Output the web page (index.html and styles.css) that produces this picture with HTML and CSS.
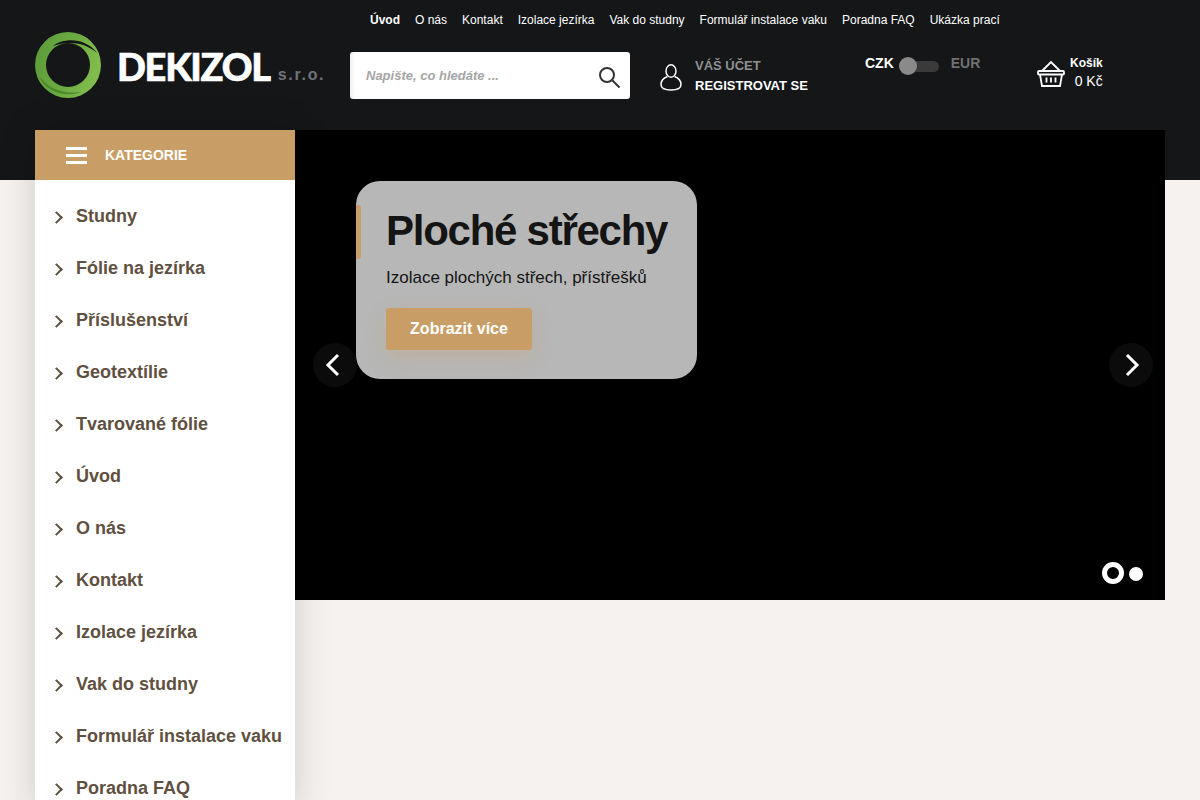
FILE: index.html
```html
<!DOCTYPE html>
<html lang="cs">
<head>
    <meta charset="UTF-8" />
    <meta name="viewport" content="width=device-width, initial-scale=1" />
    <title>Dekizol s.r.o.</title>
    <link rel="stylesheet" href="styles.css">
</head>
<body>

    <header class="hlavicka">
        <nav class="horni-menu">
            <a href="#" class="aktivni">Úvod</a>
            <a href="#">O nás</a>
            <a href="#">Kontakt</a>
            <a href="#">Izolace jezírka</a>
            <a href="#">Vak do studny</a>
            <a href="#">Formulář instalace vaku</a>
            <a href="#">Poradna FAQ</a>
            <a href="#">Ukázka prací</a>
        </nav>

        <div class="hlavni-radek">
            <a href="#" class="logo">
                <svg class="logo-kruh" width="66" height="66" viewBox="0 0 66 66">
                    <defs>
                        <linearGradient id="zelena" x1="0" y1="0" x2="1" y2="0.3">
                            <stop offset="0" stop-color="#5a9a38" />
                            <stop offset="0.6" stop-color="#6dab42" />
                            <stop offset="1" stop-color="#80bb4c" />
                        </linearGradient>
                    </defs>
                    <path fill-rule="evenodd" fill="url(#zelena)" d="M33 0a33 33 0 1 1 0 66a33 33 0 1 1 0-66zM33 11a22 22 0 1 0 0 44a22 22 0 1 0 0-44z" />
                    <path fill="#141618" d="M18 14C28 6 50 5 62 21C49 10 33 9 18 14z" />
                    <path fill="#4d8a2e" d="M4 44C10 60 30 66 46 60C30 62 14 58 4 44z" />
                </svg>
                <span class="logo-nazev">DEKIZOL</span>
                <span class="logo-sro">s.r.o.</span>
            </a>

            <form class="hledani">
                <input type="text" placeholder="Napište, co hledáte ..." />
                <svg width="24" height="24" viewBox="0 0 24 24" fill="none" stroke="#333" stroke-width="2">
                    <circle cx="10" cy="11" r="7" />
                    <path d="M15 16L22.500 23.500" />
                </svg>
            </form>

            <a href="#" class="ucet">
                <svg width="22" height="27" viewBox="0 0 22 27" fill="none" stroke="#fff" stroke-width="1.500">
                    <ellipse cx="11" cy="7" rx="5" ry="6.200" />
                    <path d="M7.500 12.500C3.500 14 1 16.500 1 20.500C1 24 4 26 11 26C18 26 21 24 21 20.500C21 16.500 18.500 14 14.500 12.500" />
                </svg>
                <span class="ucet-text">
                    <span class="ucet-popis">VÁŠ ÚČET</span>
                    <span class="ucet-odkaz">REGISTROVAT SE</span>
                </span>
            </a>

            <div class="mena">
                <span class="mena-aktivni">CZK</span>
                <span class="prepinac"><span class="prepinac-bod"></span></span>
                <span class="mena-druha">EUR</span>
            </div>

            <a href="#" class="kosik">
                <svg width="28" height="26" viewBox="0 0 28 26" fill="none" stroke="#fff" stroke-width="1.800">
                    <path d="M5 10L14 1L23 10" />
                    <rect x="1" y="10" width="26" height="3.500" rx="1" />
                    <path d="M3 13.500L5 25H23L25 13.500" />
                    <path d="M9.500 16.500V21.500M14 16.500V21.500M18.500 16.500V21.500" />
                </svg>
                <span class="kosik-text">
                    <strong>Košík</strong>
                    <span>0 Kč</span>
                </span>
            </a>
        </div>
    </header>

    <main class="obsah">
        <aside class="kategorie">
            <div class="kategorie-hlava">
                <span class="hamburger"><i></i><i></i><i></i></span>
                KATEGORIE
            </div>
            <ul class="kategorie-seznam">
                <li><a href="#">Studny</a></li>
                <li><a href="#">Fólie na jezírka</a></li>
                <li><a href="#">Příslušenství</a></li>
                <li><a href="#">Geotextílie</a></li>
                <li><a href="#">Tvarované fólie</a></li>
                <li><a href="#">Úvod</a></li>
                <li><a href="#">O nás</a></li>
                <li><a href="#">Kontakt</a></li>
                <li><a href="#">Izolace jezírka</a></li>
                <li><a href="#">Vak do studny</a></li>
                <li><a href="#">Formulář instalace vaku</a></li>
                <li><a href="#">Poradna FAQ</a></li>
            </ul>
        </aside>

        <section class="slider">
            <div class="karta">
                <span class="karta-znacka"></span>
                <h1>Ploché střechy</h1>
                <p>Izolace plochých střech, přístřešků</p>
                <a href="#" class="tlacitko">Zobrazit více</a>
            </div>

            <button class="sipka sipka-leva" aria-label="Předchozí">
                <svg width="16" height="24" viewBox="0 0 16 24" fill="none" stroke="#fff" stroke-width="3"><path d="M13 2L3 12L13 22" /></svg>
            </button>
            <button class="sipka sipka-prava" aria-label="Další">
                <svg width="16" height="24" viewBox="0 0 16 24" fill="none" stroke="#fff" stroke-width="3"><path d="M3 2L13 12L3 22" /></svg>
            </button>

            <div class="tecky">
                <span class="tecka tecka-aktivni"></span>
                <span class="tecka"></span>
            </div>
        </section>
    </main>

</body>
</html>
```

FILE: styles.css
```css
* {
    box-sizing: border-box;
}

html,
body {
    height: 800px;
    overflow: hidden;
}

body {
    font-family: 'Liberation Sans', Arial, sans-serif;
    background-color: #f6f2ef;
    margin: 0;
    color: #333;
}

a {
    color: inherit;
    text-decoration: none;
}

.hlavicka {
    background-color: #141618;
    height: 180px;
    padding: 0 35px;
    color: white;
}

.horni-menu {
    display: flex;
    gap: 15px;
    height: 32px;
    padding: 13px 0 0 335px;
    font-size: 12px;
    line-height: 14px;
}

.horni-menu .aktivni {
    font-weight: 700;
}

.hlavni-radek {
    display: flex;
    align-items: flex-start;
}

.logo {
    display: flex;
    width: 315px;
    height: 66px;
    flex-shrink: 0;
}

.logo-nazev {
    margin: 14px 0 0 16px;
    font-family: Lato, sans-serif;
    font-size: 38px;
    line-height: 40px;
    font-weight: 900;
    letter-spacing: -1.300px;
    -webkit-text-stroke: 0.6px white;
}

.logo-sro {
    margin: 34px 0 0 8px;
    font-family: 'Liberation Sans', sans-serif;
    font-size: 16px;
    line-height: 18px;
    font-weight: 700;
    letter-spacing: 1.700px;
    color: #6f737a;
    white-space: nowrap;
}

.hledani {
    display: flex;
    align-items: center;
    width: 280px;
    height: 47px;
    margin-top: 20px;
    padding-right: 9px;
    background-color: white;
    border-radius: 3px;
    box-shadow: inset 5px 0 5px -3px rgba(0,0,0,0.08);
}

.hledani input {
    flex: 1;
    min-width: 0;
    border: none;
    outline: none;
    background: none;
    padding: 0 0 0 16px;
    font-family: inherit;
    font-size: 13px;
    font-style: italic;
    font-weight: 700;
}

.hledani input::placeholder {
    color: #a5a5a5;
    opacity: 1;
}

.ucet {
    display: flex;
    gap: 13px;
    width: 205px;
    margin: 26px 0 0 30px;
    flex-shrink: 0;
}

.ucet svg {
    margin-top: 6px;
}

.ucet-text {
    display: flex;
    flex-direction: column;
    gap: 5px;
    font-size: 13px;
    line-height: 15px;
    font-weight: 700;
}

.ucet-popis {
    color: #909090;
}

.mena {
    display: flex;
    align-items: flex-start;
    width: 172px;
    margin-top: 23px;
    flex-shrink: 0;
    font-size: 14px;
    line-height: 16px;
    font-weight: 700;
}

.mena-aktivni {
    color: white;
}

.prepinac {
    position: relative;
    width: 40px;
    height: 11px;
    margin: 6px 12px 0 5px;
    background-color: #3a3a3a;
    border-radius: 6px;
}

.prepinac-bod {
    position: absolute;
    left: 0;
    top: -4px;
    width: 18px;
    height: 18px;
    background-color: #8a8a8a;
    border-radius: 50%;
}

.mena-druha {
    color: #707070;
}

.kosik {
    display: flex;
    gap: 5px;
    margin-top: 24px;
}

.kosik svg {
    margin-top: 5px;
}

.kosik-text {
    display: flex;
    flex-direction: column;
    align-items: flex-end;
    font-size: 14px;
    line-height: 16px;
    gap: 3px;
}

.kosik-text strong {
    font-size: 12px;
    line-height: 14px;
}

.obsah {
    display: flex;
    align-items: flex-start;
    margin-top: -50px;
    padding: 0 35px;
}

.kategorie {
    position: relative;
    width: 260px;
    flex-shrink: 0;
    background-color: white;
    box-shadow: 0 0 35px rgba(0,0,0,0.16);
}

.kategorie-hlava {
    display: flex;
    align-items: center;
    gap: 18px;
    height: 50px;
    padding-left: 31px;
    background-color: #c99e66;
    color: white;
    font-size: 14px;
    font-weight: 700;
}

.hamburger {
    display: flex;
    flex-direction: column;
    gap: 4px;
}

.hamburger i {
    display: block;
    width: 21px;
    height: 3px;
    background-color: white;
}

.kategorie-seznam {
    list-style: none;
    margin: 0;
    padding: 10px 0 0;
}

.kategorie-seznam li {
    height: 52px;
}

.kategorie-seznam a {
    position: relative;
    display: flex;
    align-items: center;
    height: 100%;
    padding-left: 41px;
    font-size: 18px;
    font-weight: 700;
    color: #5f503f;
    white-space: nowrap;
}

.kategorie-seznam a::before {
    content: "";
    position: absolute;
    left: 17px;
    top: 22.500px;
    width: 7px;
    height: 7px;
    border-top: 2.500px solid #5f503f;
    border-right: 2.500px solid #5f503f;
    transform: rotate(45deg);
}

.slider {
    position: relative;
    flex: 1;
    height: 470px;
    padding: 51px 0 0 61px;
    background-color: black;
}

.karta {
    position: relative;
    width: 341px;
    height: 198px;
    padding: 25px 30px 0;
    background-color: #b7b7b7;
    border-radius: 24px;
    color: #141414;
}

.karta-znacka {
    position: absolute;
    left: 0;
    top: 24px;
    width: 5px;
    height: 54px;
    background-color: #c99e66;
    border-radius: 0 3px 3px 0;
}

.karta h1 {
    margin: 0;
    font-size: 42px;
    line-height: 50px;
    font-weight: 700;
    letter-spacing: -1.260px;
    white-space: nowrap;
}

.karta p {
    margin: 10px 0 0;
    font-size: 17px;
    line-height: 24px;
    white-space: nowrap;
}

.tlacitko {
    display: block;
    width: 146px;
    height: 42px;
    margin-top: 18px;
    background-color: #c99e66;
    border-radius: 3px;
    box-shadow: 0 8px 20px rgba(201,158,102,0.3);
    color: white;
    font-size: 16px;
    font-weight: 700;
    line-height: 42px;
    text-align: center;
}

.sipka {
    position: absolute;
    top: 213px;
    display: flex;
    align-items: center;
    justify-content: center;
    width: 44px;
    height: 44px;
    padding: 0;
    border: none;
    border-radius: 50%;
    background-color: #0b0b0b;
}

.sipka-leva {
    left: 18px;
    padding-right: 4px;
}

.sipka-prava {
    right: 12px;
    padding-left: 2px;
}

.tecky {
    position: absolute;
    right: 22px;
    bottom: 16px;
    display: flex;
    align-items: center;
    gap: 5px;
}

.tecka {
    width: 14px;
    height: 14px;
    margin-top: 2px;
    background-color: white;
    border-radius: 50%;
}

.tecka-aktivni {
    width: 22px;
    height: 22px;
    margin-top: 0;
    background-color: transparent;
    border: 5px solid white;
}
```
